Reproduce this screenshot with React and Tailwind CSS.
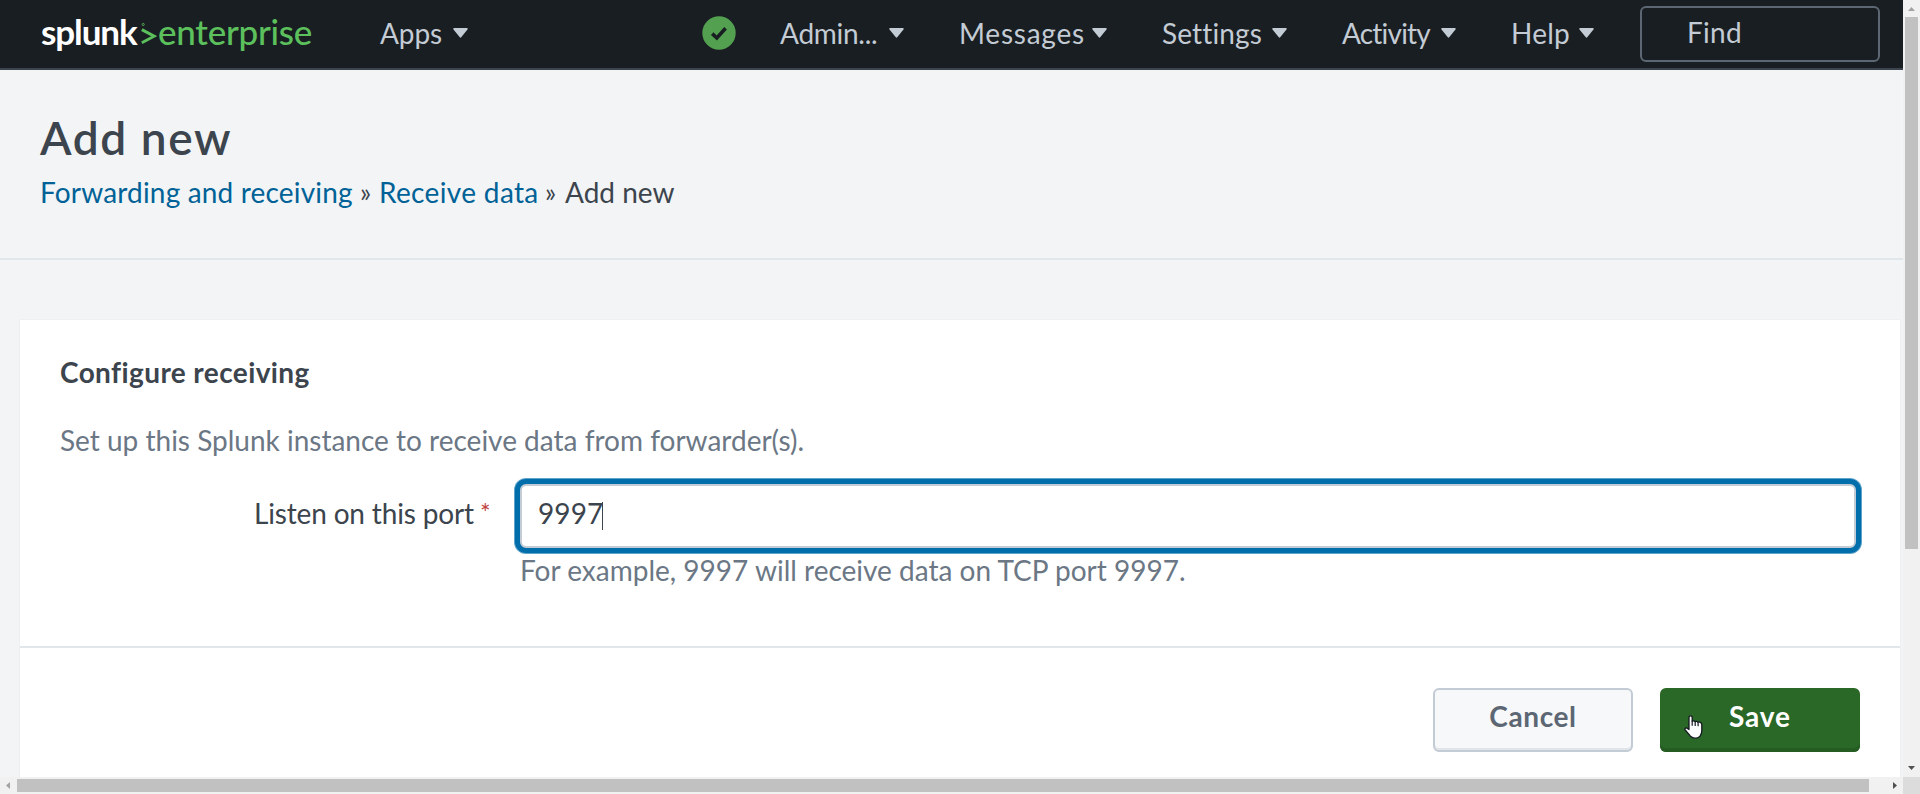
import React from 'react';

function Caret() {
  return (
    <svg className="h-[10px] w-[15px] shrink-0" viewBox="0 0 15 10">
      <path d="M1.2 0h12.6c.9 0 1.3.9.7 1.6L8.4 9a1.1 1.1 0 0 1-1.8 0L.5 1.6C-.1.9.3 0 1.2 0z" fill="#c3cbd4" />
    </svg>
  );
}

function NavItem({ label, className }) {
  return (
    <a className={`flex shrink-0 items-center justify-between whitespace-nowrap ${className}`}>
      <span>{label}</span>
      <Caret />
    </a>
  );
}

function Header() {
  return (
    <header className="flex h-[70px] shrink-0 items-start border-b-2 border-[#3c444d] bg-[#191e22] text-[28px] text-[#c3cbd4]">
      <div className="ml-[41px] flex h-[63px] w-[339px] items-center text-[35px] leading-[61px] whitespace-nowrap">
        <span className="w-[100px] font-bold tracking-[-1.09px] text-white">splunk</span>
        <svg className="h-[30px] w-[16px] shrink-0" viewBox="0 0 16 30">
          <path d="M0.8 12.6L13.2 19.2L0.8 25.8" fill="none" stroke="#5cc05c" strokeWidth="2.9" />
          <circle cx="2.2" cy="7.5" r="1.1" fill="none" stroke="#5cc05c" strokeWidth="0.8" />
        </svg>
        <span className="ml-[1px] font-medium tracking-[-0.25px] text-[#5cc05c]">enterprise</span>
      </div>
      <div className="flex h-[65px] flex-1 items-center">
        <NavItem label="Apps" className="w-[88px] tracking-[-0.1px]" />
        <svg className="ml-[234px] h-[34px] w-[34px] shrink-0" viewBox="0 0 34 34">
          <circle cx="17" cy="17" r="16.7" fill="#53a051" />
          <path d="M10.2 17.6L14.8 22L23.6 12.2" fill="none" stroke="#191e22" strokeWidth="3.6" />
        </svg>
        <nav className="ml-[44px] flex items-center gap-[55px]">
          <NavItem label="Admin..." className="w-[124px] tracking-[-0.27px]" />
          <NavItem label="Messages" className="w-[148px] tracking-[0.77px]" />
          <NavItem label="Settings" className="w-[125px] tracking-[0.14px]" />
          <NavItem label="Activity" className="w-[114px] tracking-[-0.8px]" />
          <NavItem label="Help" className="w-[83px] tracking-[0.22px]" />
        </nav>
      </div>
      <div className="mt-1.5 mr-[23px] flex h-[56px] w-[240px] shrink-0 rounded-md border-2 border-[#5c6773] pl-[45px] leading-[49px] tracking-[0.29px]">
        Find
      </div>
    </header>
  );
}

function TitleBar() {
  return (
    <section className="h-[190px] shrink-0 border-b-2 border-[#e1e6eb] pt-10 pl-10">
      <h1 className="h-[60px] text-[46px] leading-[55px] font-semibold tracking-[1.6px]">Add new</h1>
      <div className="flex h-[44px] items-center text-[28px] leading-[44px] whitespace-nowrap">
        <a className="w-[320px] tracking-[0.17px] text-[#006297]">Forwarding and receiving</a>
        <span className="w-[19px] text-[26px]">»</span>
        <a className="w-[166px] tracking-[0.35px] text-[#006297]">Receive data</a>
        <span className="w-[20px] text-[26px]">»</span>
        <span>Add new</span>
      </div>
    </section>
  );
}

function HandCursor() {
  return (
    <svg className="absolute top-[27px] left-[24px] h-[25px] w-[19px]" viewBox="0 0 19 25">
      <path
        d="M5 14.5V2.6C5 1.4 5.7.8 6.6.8s1.6.6 1.6 1.8v3.6c.4-.4 2.4-.5 2.9.5.6-.5 2.3-.4 2.8.6.6-.4 1.9-.4 2.5.1.9.5 1.4 1.1 1.4 2.2v6.2c0 4.2-2.6 7.4-6.4 7.4-3.4 0-5-1.3-6.4-3.8L1 14.8c-.6-1.2.8-2.4 2-1.7z"
        fill="#fff"
        stroke="#141821"
        strokeWidth="1.3"
        strokeLinejoin="round"
      />
      <path d="M8.2 5.8v5M11.2 6.5v4.5M14.1 7.2v4" fill="none" stroke="#141821" strokeWidth="1.2" />
    </svg>
  );
}

function FormCard() {
  return (
    <main className="mt-[60px] ml-5 flex h-[457px] w-[1880px] shrink-0 flex-col bg-white text-[28px] whitespace-nowrap shadow-[0_0_1px_#d5dbe1]">
      <div className="h-[326px] pt-[32px]">
        <h2 className="h-[40px] pl-10 leading-[40px] font-bold tracking-[0.4px]">Configure receiving</h2>
        <p className="mt-[28px] h-[40px] pl-10 leading-[40px] text-[#6b7785]">
          Set up this Splunk instance to receive data from forwarder(s).
        </p>
        <div className="mt-[24px] flex h-[64px]">
          <div className="flex w-[500px] pl-[234px] leading-[58px]">
            <label className="w-[226px] tracking-[-0.16px]">Listen on this port</label>
            <span className="text-[25px] leading-[57px] text-[#c0423f]">*</span>
          </div>
          <div className="flex h-[64px] w-[1336px] rounded-md border-2 border-[#c3cbd4] bg-white pl-4 leading-[55px] shadow-[0_0_0_5px_#006eaa,0_0_0_6px_#5fa3cb]">
            <span className="w-[64px] tracking-[0.09px]">9997</span>
            <span className="mt-4 h-[28px] w-px bg-[#3c444d]" />
          </div>
        </div>
        <p className="mt-[2px] h-[40px] pl-[500px] leading-[40px] text-[#6b7785]">
          For example, 9997 will receive data on TCP port 9997.
        </p>
      </div>
      <div className="flex flex-1 justify-end gap-[27px] border-t-2 border-[#e1e6eb] pt-10 pr-10 text-center font-bold">
        <button className="h-[64px] w-[200px] rounded-md border-2 border-[#c3cbd4] bg-[#f7f8fa] pb-[8px] tracking-[0.6px] text-[#5c6773] shadow-[inset_0_-2px_0_#e1e4e8]">
          Cancel
        </button>
        <button className="relative h-[64px] w-[200px] rounded-md bg-[#2a6827] pb-[8px] tracking-[0.9px] text-white shadow-[inset_0_-4px_0_#255c22]">
          Save
          <HandCursor />
        </button>
      </div>
    </main>
  );
}

export default function App() {
  return (
    <div className="flex h-[794px] w-[1920px] flex-col overflow-hidden bg-[#f2f4f5] font-['Lato',sans-serif] text-[#3c444d]">
      <div className="flex h-[777px]">
        <div className="flex w-[1903px] flex-col overflow-hidden">
          <Header />
          <TitleBar />
          <FormCard />
        </div>
        <div className="flex w-[17px] flex-col items-center bg-[#f1f1f1]">
          <svg className="h-[17px] w-[17px] shrink-0" viewBox="0 0 17 17">
            <path d="M5 11L8.5 7l3.5 4z" fill="#a3a3a3" />
          </svg>
          <div className="h-[532px] w-[13px] bg-[#c1c1c1]" />
          <div className="flex-1" />
          <svg className="h-[17px] w-[17px] shrink-0" viewBox="0 0 17 17">
            <path d="M5 6L8.5 10l3.5-4z" fill="#505050" />
          </svg>
        </div>
      </div>
      <div className="flex h-[17px] items-center bg-[#f1f1f1]">
        <svg className="h-[17px] w-[17px] shrink-0" viewBox="0 0 17 17">
          <path d="M10 5L6 8.5l4 3.5z" fill="#a3a3a3" />
        </svg>
        <div className="h-[13px] w-[1852px] bg-[#c1c1c1]" />
        <div className="flex-1" />
        <svg className="h-[17px] w-[17px] shrink-0" viewBox="0 0 17 17">
          <path d="M7 5l4 3.5L7 12z" fill="#505050" />
        </svg>
        <div className="h-[17px] w-[17px] bg-[#dcdcdc]" />
      </div>
    </div>
  );
}
